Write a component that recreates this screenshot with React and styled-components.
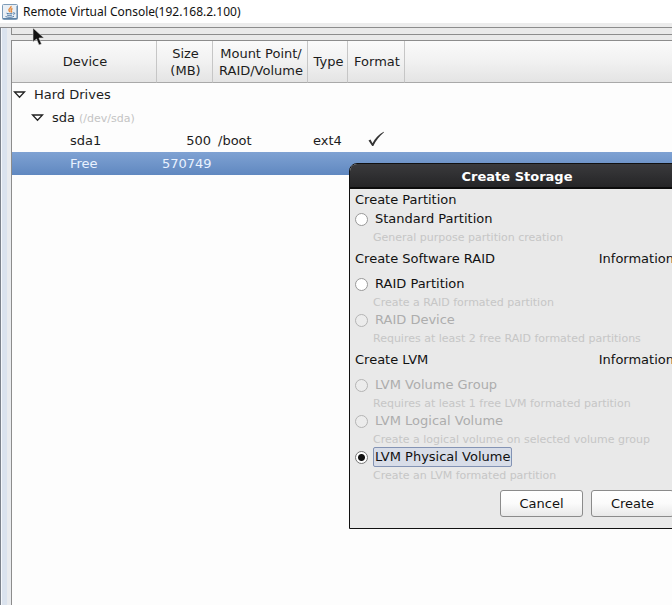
import React, { useState } from 'react'
import styled, { createGlobalStyle } from 'styled-components'

const GlobalStyle = createGlobalStyle`
  *{
    box-sizing:border-box;
  }
  body{
    margin:0;
    background:#fdfdfd;
    color:#1c1c1c;
    font-family:"DejaVu Sans", sans-serif;
    font-size:13px;
  }
  button, input{
    font:inherit;
    color:inherit;
  }
`

const Console = styled.div`
  position:relative;
  display:flex;
  flex-direction:column;
  min-height:100vh;
  overflow:hidden;
`

const ConsoleTitle = styled.header`
  display:flex;
  align-items:center;
  gap:5px;
  height:23px;
  padding:0 2px;
  background:#fff;
  color:#111;
  font-family:"Noto Sans", sans-serif;
  font-size:12px;
`

const Frame = styled.div`
  display:flex;
  flex:1;
  border-top:4px solid #ececec;
`

const FrameEdge = styled.div`
  flex:0 0 11px;
  border-top:1px solid #8c8c8c;
  border-left:1px solid #7d838c;
  background:linear-gradient(to right, #f4f7fb 0 1px, #dbe3ee 1px 6px, #e9ebee 6px);
`

const Screen = styled.main`
  display:flex;
  flex-direction:column;
  flex:1;
  min-width:0;
  background:#e9e9e9;
`

const Strip = styled.div`
  height:8px;
  margin-bottom:5px;
  border:1px solid #8c8c8c;
  border-right:none;
`

const DevicePanel = styled.div`
  flex:1;
  border-top:1px solid #8c8c8c;
  border-left:1px solid #8c8c8c;
  background:#fdfdfd;
`

const DeviceTable = styled.table`
  width:100%;
  table-layout:fixed;
  border-collapse:separate;
  border-spacing:0;

  th{
    height:42px;
    padding:0 0 0 2px;
    border-bottom:1px solid #a9a9a9;
    border-right:1px solid #c6c6c6;
    background:linear-gradient(#fafafa, #f1f1f1 50%, #e4e4e4);
    font-weight:normal;
    line-height:17px;
    white-space:nowrap;
  }
  th:last-child{
    border-right:none;
  }
`

const Column = styled.col`
  width:${({ $width }) => $width ? `${$width}px` : 'auto'};
`

const DeviceRow = styled.tr`
  color:${({ $selected }) => $selected ? '#e9f2ff' : 'inherit'};
  background:${({ $selected }) => $selected ? 'linear-gradient(#7fa2d3, #6088c0)' : 'none'};
`

const Cell = styled.td`
  height:23px;
  padding:0 2px 0 5px;
  text-align:${({ $align }) => $align || 'left'};
  white-space:nowrap;
`

const TreeCell = styled(Cell)`
  padding-left:${({ $level }) => [1, 19, 58][$level]}px;
`

const TreeLabel = styled.div`
  display:flex;
  align-items:center;
  gap:8px;

  small{
    margin-left:4px;
    color:#c4c4c4;
    font-size:11px;
  }
`

const Toggle = styled.button`
  display:flex;
  padding:0;
  border:none;
  background:none;
`

const Dialog = styled.section`
  position:absolute;
  top:163px;
  left:349px;
  width:336px;
  border:1px solid #111;
  border-radius:8px 8px 0 0;
  background:#e9e9e9;
  color:#111;
  overflow:hidden;
`

const DialogTitle = styled.h2`
  margin:0;
  height:25px;
  border-bottom:2px solid #0c0c0c;
  background:linear-gradient(#3a3a3c, #252527);
  color:#fff;
  font-size:13px;
  line-height:25px;
  text-align:center;
`

const DialogBody = styled.form`
  padding:1px 10px 11px 5px;
`

const Section = styled.fieldset`
  margin:0;
  padding:0;
  border:none;
`

const SectionHead = styled.div`
  display:flex;
  align-items:center;
  justify-content:space-between;
  height:${({ $tall }) => $tall ? 29 : 18}px;
`

const InfoButton = styled.button`
  padding:0;
  border:none;
  background:none;
`

const Option = styled.div`
  height:36px;
  padding-top:1px;
  color:${({ $disabled }) => $disabled ? '#adadad' : 'inherit'};
`

const OptionRow = styled.div`
  display:flex;
  align-items:center;
  gap:5px;
  height:20px;
`

const Radio = styled.input`
  appearance:none;
  flex:none;
  width:13px;
  height:13px;
  margin:0;
  border:1px solid #999;
  border-radius:50%;
  background:#fff;

  &:checked{
    border-color:#777;
    background:radial-gradient(circle, #111 0 3px, #fff 4px);
  }
  &:disabled{
    border-color:#b4b4b4;
    background:#ececec;
  }
`

const OptionLabel = styled.label`
  padding:0 1px;
  border:1px solid ${({ $focused }) => $focused ? '#8393b4' : 'transparent'};
  border-radius:2px;
  background:${({ $focused }) => $focused ? '#d8dde8' : 'none'};
  line-height:18px;
  white-space:nowrap;
`

const Hint = styled.p`
  margin:0;
  padding:2px 0 0 18px;
  color:#c6c6c6;
  font-size:11px;
  line-height:14px;
  white-space:nowrap;
`

const Actions = styled.div`
  display:flex;
  justify-content:flex-end;
  gap:8px;
  margin-top:8px;
`

const ActionButton = styled.button`
  width:83px;
  height:27px;
  padding:0;
  border:1px solid #8b8b8b;
  border-radius:3px;
  background:linear-gradient(#fff, #fbfbfb 50%, #e8e8e8);
`

const Pointer = styled.svg`
  position:absolute;
  top:27px;
  left:32px;
`

const JavaIcon = () => (
  <svg width="16" height="16" viewBox="0 0 16 16" aria-hidden="true">
    <rect x="0.5" y="0.5" width="15" height="15" rx="1" fill="#e9eff5" stroke="#7e9cb8" />
    <path d="M1 14.500h14V2" fill="none" stroke="#5c82a6" />
    <path d="M9 2c.8 2-3 2.500-2 4.500.3.700 1 .900 1 1.700M10.500 4.500c-1.500.700-2 1.500-1 2.500.5.700 0 1-.5 1.500" fill="none" stroke="#e58a3d" strokeWidth="1.400" />
    <path d="M4.500 9.200c2 .8 4.500.8 6 0M5 11c1.500.7 3.500.7 5 0M3.500 12.600c2.500 1 6.500.9 8.500-.2M11 9c2-.8 2.500.8.3 1.800" fill="none" stroke="#4f7ba6" />
  </svg>
)

const Triangle = () => (
  <svg width="13" height="9" viewBox="0 0 13 9" aria-hidden="true">
    <path d="M1.500 2h10L6.500 7.300z" fill="#fff" stroke="#222" strokeWidth="1.300" />
  </svg>
)

const Check = () => (
  <svg width="20" height="16" viewBox="0 0 20 16" role="img" aria-label="Yes">
    <path d="M.5 9.500 2.500 8.500l2 3.800C7 7.500 10.500 3.500 15.700.8l.3.5C11.500 5 8 9.500 5.300 15H4.200z" fill="#333" />
  </svg>
)

const rows = [
  { name: 'Hard Drives', level: 0 },
  { name: 'sda', level: 1, path: '(/dev/sda)' },
  { name: 'sda1', level: 2, size: '500', mount: '/boot', type: 'ext4', format: true },
  { name: 'Free', level: 2, size: '570749', selected: true },
]

const sections = [
  {
    title: 'Create Partition',
    options: [
      { id: 'standard', label: 'Standard Partition', hint: 'General purpose partition creation' },
    ],
  },
  {
    title: 'Create Software RAID',
    info: true,
    options: [
      { id: 'raid-partition', label: 'RAID Partition', hint: 'Create a RAID formated partition' },
      { id: 'raid-device', label: 'RAID Device', hint: 'Requires at least 2 free RAID formated partitions', disabled: true },
    ],
  },
  {
    title: 'Create LVM',
    info: true,
    options: [
      { id: 'lvm-group', label: 'LVM Volume Group', hint: 'Requires at least 1 free LVM formated partition', disabled: true },
      { id: 'lvm-logical', label: 'LVM Logical Volume', hint: 'Create a logical volume on selected volume group', disabled: true },
      { id: 'lvm-physical', label: 'LVM Physical Volume', hint: 'Create an LVM formated partition' },
    ],
  },
]

const Devices = () => (
  <DeviceTable>
    <colgroup>
      <Column $width={145} />
      <Column $width={56} />
      <Column $width={95} />
      <Column $width={40} />
      <Column $width={57} />
      <Column />
    </colgroup>
    <thead>
      <tr>
        <th>Device</th>
        <th>Size<br />(MB)</th>
        <th>Mount Point/<br />RAID/Volume</th>
        <th>Type</th>
        <th>Format</th>
        <th></th>
      </tr>
    </thead>
    <tbody>
      {rows.map((row) => (
        <DeviceRow key={row.name} $selected={row.selected}>
          <TreeCell $level={row.level}>
            <TreeLabel>
              {row.level < 2 && <Toggle type="button" aria-label={`Collapse ${row.name}`}><Triangle /></Toggle>}
              <span>{row.name}{row.path && <small>{row.path}</small>}</span>
            </TreeLabel>
          </TreeCell>
          <Cell $align="right">{row.size}</Cell>
          <Cell>{row.mount}</Cell>
          <Cell>{row.type}</Cell>
          <Cell $align="center">{row.format && <Check />}</Cell>
          <Cell />
        </DeviceRow>
      ))}
    </tbody>
  </DeviceTable>
)

const CreateStorage = () => {
  const [choice, setChoice] = useState('lvm-physical')

  return (
    <Dialog role="dialog" aria-labelledby="dialog-title">
      <DialogTitle id="dialog-title">Create Storage</DialogTitle>
      <DialogBody onSubmit={(e) => e.preventDefault()}>
        {sections.map(({ title, info, options }) => (
          <Section key={title} aria-label={title}>
            <SectionHead $tall={info}>
              <span>{title}</span>
              {info && <InfoButton type="button">Information</InfoButton>}
            </SectionHead>
            {options.map(({ id, label, hint, disabled }) => (
              <Option key={id} $disabled={disabled}>
                <OptionRow>
                  <Radio
                    type="radio"
                    name="storage"
                    id={id}
                    checked={choice === id}
                    disabled={disabled}
                    onChange={() => setChoice(id)}
                  />
                  <OptionLabel htmlFor={id} $focused={choice === id}>{label}</OptionLabel>
                </OptionRow>
                <Hint>{hint}</Hint>
              </Option>
            ))}
          </Section>
        ))}
        <Actions>
          <ActionButton type="button">Cancel</ActionButton>
          <ActionButton type="submit">Create</ActionButton>
        </Actions>
      </DialogBody>
    </Dialog>
  )
}

const App = () => {
  return (
    <>
      <GlobalStyle />
      <Console>
        <ConsoleTitle><JavaIcon />Remote Virtual Console(192.168.2.100)</ConsoleTitle>
        <Frame>
          <FrameEdge />
          <Screen>
            <Strip />
            <DevicePanel>
              <Devices />
            </DevicePanel>
          </Screen>
        </Frame>
        <Pointer width="13" height="20" viewBox="0 0 13 20" aria-hidden="true">
          <path d="M1 1v14l3.500-3 2.500 6 2.500-1-2.500-6H12z" fill="#111" stroke="#ddd" strokeWidth=".6" />
        </Pointer>
        <CreateStorage />
      </Console>
    </>
  )
}

export default App
